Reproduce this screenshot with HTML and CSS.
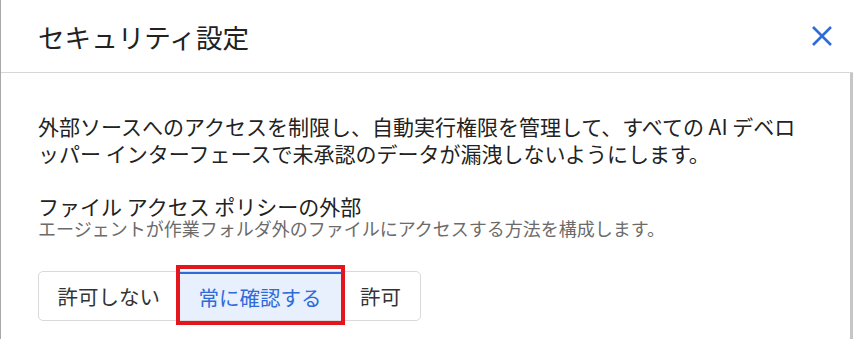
FILE: index.html
```html
<!DOCTYPE html>
<html lang="ja">
<head>
    <meta charset="utf-8">
    <title>セキュリティ設定</title>
    <link rel="stylesheet" href="styles.css">
</head>
<body>
    <div class="dialog">
        <div class="dialog-header">
            <h2 class="dialog-title">セキュリティ設定</h2>
            <button class="close-button" aria-label="閉じる">
                <svg width="22" height="22" viewBox="0 0 22 22">
                    <path d="M2 2 L20 20 M20 2 L2 20" stroke="#2f6bd8" stroke-width="2.6" fill="none"/>
                </svg>
            </button>
        </div>

        <div class="dialog-body">
            <p class="intro">外部ソースへのアクセスを制限し、自動実行権限を管理して、すべての AI デベロッパー インターフェースで未承認のデータが漏洩しないようにします。</p>

            <div class="setting">
                <div class="setting-title">ファイル アクセス ポリシーの外部</div>
                <div class="setting-desc">エージェントが作業フォルダ外のファイルにアクセスする方法を構成します。</div>
            </div>

            <div class="segmented">
                <button class="segment">許可しない</button>
                <button class="segment selected">常に確認する</button>
                <button class="segment">許可</button>
            </div>
        </div>
    </div>
</body>
</html>
```

FILE: styles.css
```css
body {
    margin: 0;
    font-family: "Noto Sans CJK JP", "Noto Sans", sans-serif;
    color: #202124;
    background: #fff;
}

.dialog {
    border-left: 1px solid #a8a8a8;
    height: 339px;
    overflow: hidden;
}

.dialog-header {
    display: flex;
    align-items: center;
    justify-content: space-between;
    height: 72px;
    padding: 0 20px 0 37px;
    border-bottom: 1px solid #d6d6d6;
}

.dialog-title {
    margin: 0;
    font-size: 26.6px;
    font-weight: 400;
    color: #222;
}

.close-button {
    background: none;
    border: none;
    padding: 0;
    width: 22px;
    height: 22px;
    cursor: pointer;
}

.dialog-body {
    padding: 40px 35px 0 37px;
    border-right: 3px solid #c6c6c6;
    height: 300px;
}

.intro {
    margin: 0;
    font-size: 21px;
    line-height: 27px;
    line-break: loose;
    color: #222;
}

.setting {
    margin-top: 27px;
}

.setting-title {
    font-size: 21px;
    line-height: 24px;
    color: #222;
}

.setting-desc {
    font-size: 18px;
    line-height: 21px;
    color: #6b6b6b;
}

.segmented {
    display: inline-flex;
    margin-top: 32px;
    border: 1px solid #d9d9d9;
    border-radius: 5px;
    height: 48px;
}

.segment {
    font-family: inherit;
    font-size: 20.5px;
    color: #333;
    background: none;
    border: none;
    padding: 0 18.5px;
    cursor: pointer;
}

.segment.selected {
    position: relative;
    color: #2f6bd8;
    background: #e8f0fe;
    border-top: 2px solid #2f6bd8;
    padding: 0 20px;
}

.segment.selected::after {
    content: "";
    position: absolute;
    top: -9px;
    left: -3px;
    right: -3px;
    bottom: -5px;
    border: 4px solid #e3161d;
}
```
